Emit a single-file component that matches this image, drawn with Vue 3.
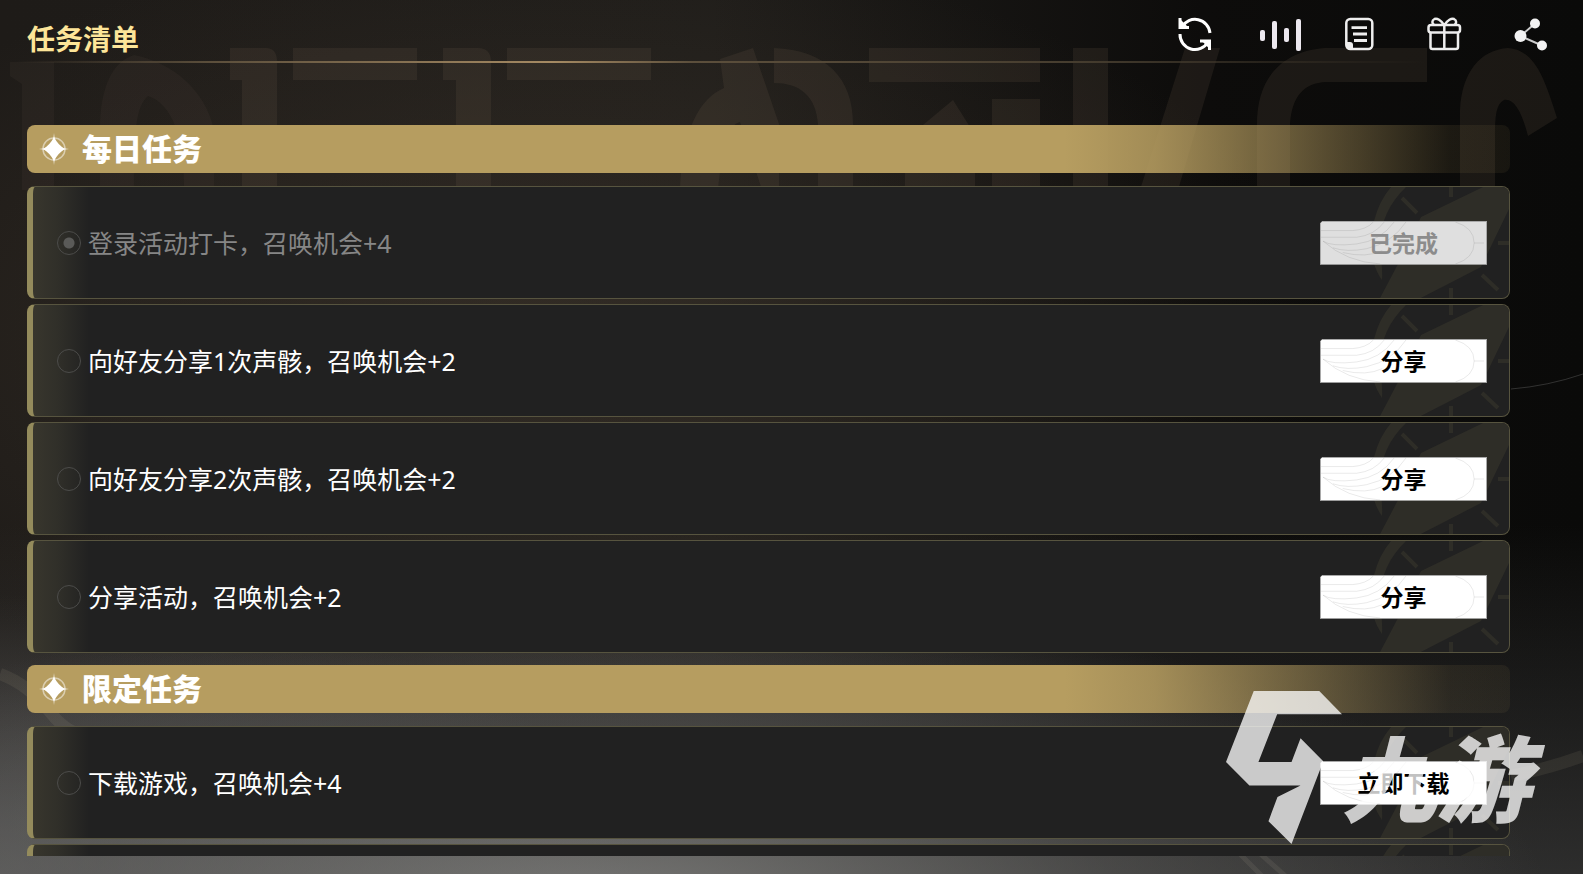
<template>
  <div class="page">
    <svg class="backdrop" viewBox="0 0 1583 874" preserveAspectRatio="none" aria-hidden="true">
      <g class="ghost">
        <path class="faint" d="M10 62H54V190H22V84L10 76Z" />
        <path class="faint" d="M100 130C100 88 112 62 134 55C170 62 205 88 214 130V190H184C184 136 172 104 148 96C136 106 134 130 134 190H100Z" />
        <path d="M230 48H266Q277 48 277 62V190H242V80H230Z" />
        <path d="M293 48H417V80H293Z" />
        <path d="M443 48H478Q491 48 491 62V190H456V80H443Z" />
        <path d="M507 48H651V80H507Z" />
        <path d="M720 59L753 48L779 124V190H762L740 122C728 124 722 150 718 190H680C682 130 700 98 724 88Z" />
        <path d="M774 48C826 50 853 78 853 124V190H818V124C816 96 800 83 774 83Z" />
        <path d="M869 48H1040V82H869Z" />
        <path d="M905 190V140L953 100L975 135V190Z" />
        <path d="M992 99H1040V190H992Z" />
        <path d="M1073 48H1108V190H1073Z" />
        <path d="M1185 48H1220L1178 190H1140Z" />
        <path d="M1427 48H1325C1276 52 1257 84 1257 124V190H1290V124C1292 96 1304 83 1326 82H1427Z" />
        <path d="M1460 190V110C1462 72 1480 50 1508 48C1534 50 1544 76 1557 118L1528 136C1522 112 1514 98 1504 100C1496 104 1495 116 1495 136V190Z" />
      </g>
      <g class="trails">
        <path d="M1511 389Q1548 386 1583 374" />
        <path class="wide" d="M0 674Q28 684 50 712T96 734" />
        <path class="wide" d="M1511 776Q1550 768 1583 756" />
        <path class="streak" d="M1236 850L1266 880M1256 850L1290 880" />
      </g>
    </svg>

    <header class="topbar">
      <h1>任务清单</h1>
      <nav class="tools" aria-label="活动工具">
        <button v-for="tool in tools" :key="tool.name" type="button" class="tool" :aria-label="tool.label">
          <svg v-if="tool.name === 'refresh'" viewBox="0 0 36 36">
            <g fill="none" stroke="#fff" stroke-width="3">
              <path d="M34 17A15 15 0 0 0 6 11" />
              <path d="M4 2V11.5H13" />
              <path d="M4 18A15 15 0 0 0 32 26" />
              <path d="M24 25H33.5V34" />
            </g>
            <path d="M4 3L12 11H4ZM33.5 33L26 25H33.5Z" fill="#fff" />
          </svg>
          <svg v-else-if="tool.name === 'wave'" viewBox="0 0 36 36" fill="#ece8ef">
            <rect x="0" y="14" width="5" height="11" rx="2" />
            <rect x="12" y="5" width="5" height="28" rx="2" />
            <rect x="24" y="12" width="5" height="14" rx="2" />
            <rect x="36" y="3" width="5" height="32" rx="2" />
          </svg>
          <svg v-else-if="tool.name === 'rules'" viewBox="0 0 36 36" fill="none" stroke="#eee" stroke-width="2.5">
            <rect x="2.3" y="3" width="26" height="30" rx="4" />
            <path d="M7.5 11.7H23M9 18H23M10 24.5H23" stroke-width="2.8" />
            <path d="M2 26H6Q9 26 9 29V33H5Q2 33 2 30Z" fill="#eee" stroke="none" />
          </svg>
          <svg v-else-if="tool.name === 'gift'" viewBox="0 0 36 36" fill="none" stroke="#eee" stroke-width="2.5">
            <rect x="0.5" y="9" width="31.5" height="7.5" rx="2.5" />
            <path d="M2.5 16.5V31Q2.5 33 4.500 33H28Q30 33 30 31V16.5M16.3 9V33" />
            <path d="M16 9C13 4 9 2 6.5 3C3.5 4.5 4 7.5 6 9M16.5 9C19.5 4 23.5 2 26 3C29 4.5 28.5 7.5 26.5 9" />
          </svg>
          <svg v-else viewBox="0 0 36 36" fill="#f3f3f3">
            <path d="M23 7.5L8.5 20L30 29.5" fill="none" stroke="#ccc" stroke-width="2" />
            <circle cx="8.5" cy="20" r="6" />
            <circle cx="23" cy="7.5" r="5" />
            <circle cx="30" cy="29.5" r="5" />
          </svg>
        </button>
      </nav>
    </header>

    <main class="list">
      <section v-for="group in groups" :key="group.title">
        <h2 class="banner">
          <svg class="star" viewBox="-16 -16 32 32" aria-hidden="true">
            <circle r="11" fill="none" stroke="#fff" stroke-opacity=".5" stroke-width="1.5" />
            <path d="M0 -16L1 -9Q3 -3 9 -1L15 0L9 1Q3 3 1 9L0 16L-1 9Q-3 3 -9 1L-15 0L-9 -1Q-3 -3 -1 -9Z" fill="#fff" fill-opacity=".7" />
            <path d="M0 -12Q4 -4 11 0Q4 4 0 12Q-4 4 -11 0Q-4 -4 0 -12Z" fill="#fff" />
          </svg>
          <span>{{ group.title }}</span>
        </h2>
        <ul class="cards">
          <li v-for="task in group.tasks" :key="task.id" class="card" :class="{ done: task.done }">
            <svg class="compass" viewBox="0 0 140 113" aria-hidden="true">
              <path d="M22 0H37C20 16 12 36 11 54C11 68 14 80 13 93C2 78 -1 54 5 34Q10 14 22 0Z" />
              <path d="M52 30L114 0H140V22L112 80L48 113H10L38 60Z" />
              <path d="M33 11L48 26M113 88L129 103M82 0V10M82 101V113M129 56H140" fill="none" stroke="#2e2d27" stroke-width="4" />
            </svg>
            <template v-if="task.label">
              <input :id="task.id" class="mark" type="radio" :name="task.id" :checked="task.done" :disabled="task.done" />
              <label :for="task.id" class="label">{{ task.label }}</label>
              <button type="button" class="action" :disabled="task.done">
                <svg viewBox="0 0 167 44" preserveAspectRatio="none" aria-hidden="true">
                  <path d="M0 9H32Q46 8 53 0M0 16H36Q54 14 64 0M2 20Q10 26 36 23Q60 20 74 0M12 27Q26 32 46 28Q72 22 86 0M22 32Q46 38 62 30M2 20Q26 42 60 44M136 0Q155 6 155 22Q155 38 136 44M155 22H165" />
                </svg>
                <span>{{ task.action }}</span>
              </button>
            </template>
          </li>
        </ul>
      </section>
    </main>

    <div class="brand">
      <svg viewBox="78 123 347 457" aria-hidden="true">
        <path d="M161 123H357L425 192H231L175 335H274L301 264L369 333L274 580L205 512L232 440L301 405H148L78 335Z" />
      </svg>
      <span>九游</span>
    </div>
  </div>
</template>

<script setup>
const tools = [
  { name: 'refresh', label: '刷新' },
  { name: 'wave', label: '声音' },
  { name: 'rules', label: '规则' },
  { name: 'gift', label: '奖励' },
  { name: 'share', label: '分享' }
]

const groups = [
  {
    title: '每日任务',
    tasks: [
      { id: 'login', label: '登录活动打卡，召唤机会+4', action: '已完成', done: true },
      { id: 'share-one', label: '向好友分享1次声骸，召唤机会+2', action: '分享', done: false },
      { id: 'share-two', label: '向好友分享2次声骸，召唤机会+2', action: '分享', done: false },
      { id: 'share-event', label: '分享活动，召唤机会+2', action: '分享', done: false }
    ]
  },
  {
    title: '限定任务',
    tasks: [
      { id: 'download', label: '下载游戏，召唤机会+4', action: '立即下载', done: false },
      { id: 'next', label: '', action: '', done: false }
    ]
  }
]
</script>

<style>
body {
  margin: 0;
  background: #1b1a17;
}
</style>

<style scoped>
.page {
  position: relative;
  display: flex;
  flex-direction: column;
  box-sizing: border-box;
  height: 100vh;
  padding-bottom: 18px;
  overflow: hidden;
  color: #fff;
  font-family: "Noto Sans", "Noto Sans CJK SC", sans-serif;
  background:
    radial-gradient(ellipse 60% 36% at 38% 104%, rgba(140, 140, 138, 0.75), rgba(110, 110, 108, 0.4) 55%, transparent),
    radial-gradient(ellipse 40% 32% at 0% 100%, rgba(105, 105, 105, 0.6), transparent),
    radial-gradient(ellipse 50% 45% at 34% 38%, rgba(66, 56, 46, 0.55), transparent),
    linear-gradient(180deg, transparent 60%, rgba(80, 80, 80, 0.5)),
    linear-gradient(90deg, #1e1b18, #1f1d1a 45%, #0d0c0b 76%, #0a0a09);
}

.backdrop {
  position: absolute;
  inset: 0;
  width: 100%;
  height: 100%;
}

.ghost {
  fill: rgba(110, 92, 78, 0.17);
}

.ghost .faint {
  fill: rgba(110, 92, 78, 0.1);
}

.trails {
  fill: none;
  stroke: rgba(255, 255, 255, 0.16);
}

.trails .wide {
  stroke: rgba(190, 175, 150, 0.1);
  stroke-width: 12;
}

.trails .streak {
  stroke: rgba(200, 190, 170, 0.1);
  stroke-width: 5;
}

.topbar {
  position: relative;
  display: flex;
  flex: none;
  align-items: center;
  justify-content: space-between;
  height: 61px;
  margin: 0 0 64px;
  padding: 0 35px 0 27px;
}

/* thin gold rule under the title */
.topbar::after {
  content: "";
  position: absolute;
  left: 1%;
  right: 10%;
  bottom: -2px;
  height: 2px;
  background: linear-gradient(90deg, transparent, #5c4f3c 14%, #a58a63 38%, #5c4f3c 48%, #463d2f 75%, transparent);
}

h1 {
  margin: 0;
  padding-top: 16px;
  color: #fde599;
  font-size: 28px;
  font-weight: 700;
  line-height: 44px;
}

.tools {
  display: flex;
  gap: 48px;
  padding-top: 6px;
}

.tool {
  width: 36px;
  height: 36px;
  padding: 0;
  border: 0;
  background: none;
  cursor: pointer;
}

.tool svg {
  display: block;
  width: 36px;
  height: 36px;
  overflow: visible;
}

.list {
  position: relative;
  flex: 1;
  min-height: 0;
  margin: 0 73px 0 27px;
  overflow: hidden;
}

.banner {
  display: flex;
  align-items: center;
  box-sizing: border-box;
  height: 48px;
  margin: 0 0 13px;
  padding-left: 11px;
  gap: 12px;
  border-radius: 8px;
  background: linear-gradient(90deg, #b69d60 70%, rgba(182, 157, 96, 0.88) 76%, rgba(182, 157, 96, 0.5) 86%, rgba(182, 157, 96, 0.1) 96%, rgba(182, 157, 96, 0.08));
  font-size: 30px;
  font-weight: 900;
  line-height: 48px;
}

.star {
  width: 32px;
  height: 32px;
}

.cards {
  display: flex;
  flex-direction: column;
  gap: 5px;
  margin: 0 0 12px;
  padding: 0;
  list-style: none;
}

.card {
  position: relative;
  display: flex;
  align-items: center;
  box-sizing: border-box;
  height: 113px;
  padding: 0 22px 0 24px;
  overflow: hidden;
  border: 1px solid #57543f;
  border-left: 6px solid #948b5c;
  border-radius: 8px;
  background: linear-gradient(90deg, #38362d, #302f29 25px, #212121 56px);
}

.compass {
  position: absolute;
  top: 0;
  right: 0;
  width: 140px;
  height: 113px;
  fill: #2e2d27;
}

.mark {
  flex: none;
  box-sizing: border-box;
  width: 24px;
  height: 24px;
  margin: 0;
  appearance: none;
  border: 1px solid #4c4c4a;
  border-radius: 50%;
}

.mark:checked {
  background: radial-gradient(circle, #5a5a58 5px, transparent 6px);
}

.label {
  flex: 1;
  margin-left: 7px;
  font-size: 25px;
  line-height: 36px;
}

.done .label {
  color: #868686;
}

.action {
  position: relative;
  flex: none;
  width: 167px;
  height: 44px;
  padding: 0;
  border: 1px solid #a9a9a9;
  background: #fff;
  color: #000;
  font-family: inherit;
  font-size: 23px;
  font-weight: 700;
  line-height: 42px;
  cursor: pointer;
  clip-path: polygon(3px 0, 100% 0, 100% 100%, 0 100%, 0 3px);
}

.action svg {
  position: absolute;
  inset: 0;
  width: 100%;
  height: 100%;
  fill: none;
  stroke: rgba(0, 0, 0, 0.09);
}

.action span {
  position: relative;
}

.action:disabled {
  background: #dfdfdf;
  color: #8c8c8c;
  cursor: default;
}

.brand {
  position: absolute;
  right: 53px;
  bottom: 30px;
  display: flex;
  align-items: flex-end;
  opacity: 0.76;
  pointer-events: none;
}

.brand svg {
  width: 116px;
  height: 153px;
  fill: #fff;
}

.brand span {
  font-size: 94px;
  font-style: italic;
  font-weight: 900;
  line-height: 130px;
}
</style>
